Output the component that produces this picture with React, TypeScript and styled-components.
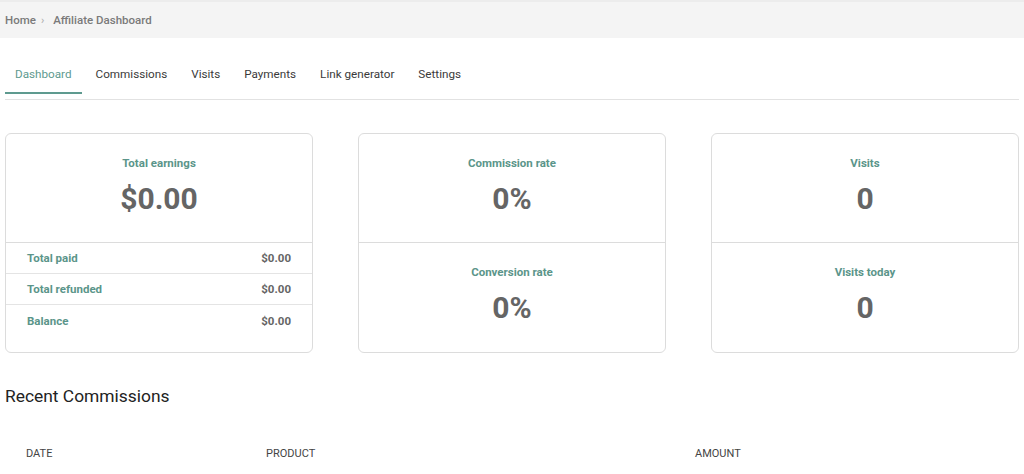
import React from 'react';
import styled, { createGlobalStyle } from 'styled-components';

const GlobalStyle = createGlobalStyle`
  html, body {
    margin: 0;
    padding: 0;
    background: #fff;
    font-family: Roboto, "Liberation Sans", Arial, sans-serif;
  }
  * { box-sizing: border-box; }
`;

const teal = '#5b958a';

const Page = styled.div`
  width: 1024px;
`;

const TopBar = styled.div`
  height: 38px;
  background: #f4f4f4;
  border-top: 2px solid #ececec;
  display: flex;
  align-items: center;
  padding: 0 5px;
  font-size: 11.5px;
  font-weight: 500;
  color: #7a7a7a;
`;

const Crumb = styled.span`
  color: #7a7a7a;
`;

const CrumbSep = styled.span`
  color: #b0b0b0;
  margin: 0 9px 0 5px;
  font-size: 11px;
`;

const Content = styled.div`
  padding: 0 5px;
`;

const TabList = styled.nav`
  display: flex;
  gap: 4px;
  margin-top: 18px;
  padding-bottom: 5px;
  border-bottom: 1px solid #e2e2e2;
`;

const Tab = styled.div<{ $active?: boolean }>`
  height: 38px;
  padding: 0 10px;
  display: flex;
  align-items: center;
  font-size: 11.7px;
  color: ${p => (p.$active ? '#5e9a8f' : '#3a3a3a')};
  border-bottom: 2px solid ${p => (p.$active ? '#5e9a8f' : 'transparent')};
`;

const CardGrid = styled.div`
  display: grid;
  grid-template-columns: repeat(3, 1fr);
  gap: 45px;
  margin-top: 33px;
`;

const Card = styled.div`
  border: 1px solid #dcdcdc;
  border-radius: 6px;
  display: flex;
  flex-direction: column;
`;

const StatBlock = styled.div<{ $divider?: boolean }>`
  height: 108px;
  display: flex;
  flex-direction: column;
  align-items: center;
  padding-top: 21px;
  border-top: ${p => (p.$divider ? '1px solid #dcdcdc' : 'none')};
`;

const StatLabel = styled.div`
  font-size: 11.5px;
  font-weight: 700;
  line-height: 16px;
  color: ${teal};
`;

const StatValue = styled.div`
  font-size: 30px;
  font-weight: 700;
  line-height: 36px;
  margin-top: 10px;
  color: #656565;
`;

const Rows = styled.div`
  border-top: 1px solid #dcdcdc;
  padding-bottom: 16px;
`;

const Row = styled.div`
  height: 31px;
  display: flex;
  align-items: center;
  justify-content: space-between;
  padding: 0 21px;
  font-size: 11.5px;
  font-weight: 700;
  border-bottom: 1px solid #e4e4e4;

  &:last-child {
    border-bottom: none;
  }
`;

const RowLabel = styled.span`
  color: ${teal};
`;

const RowValue = styled.span`
  color: #656565;
`;

const SectionTitle = styled.h2`
  margin: 32px 0 0;
  font-size: 17.4px;
  line-height: 22px;
  font-weight: 400;
  color: #222;
`;

const Table = styled.div`
  margin-top: 39px;
`;

const HeadRow = styled.div`
  display: grid;
  grid-template-columns: 240px 429px 1fr;
  padding-left: 21px;
`;

const HeadCell = styled.div`
  font-size: 11px;
  line-height: 16px;
  color: #444;
  text-transform: uppercase;
`;

const tabs = ['Dashboard', 'Commissions', 'Visits', 'Payments', 'Link generator', 'Settings'];

export default function App() {
  return (
    <Page>
      <GlobalStyle />
      <TopBar>
        <Crumb>Home</Crumb>
        <CrumbSep>›</CrumbSep>
        <Crumb>Affiliate Dashboard</Crumb>
      </TopBar>
      <Content>
        <TabList>
          {tabs.map((t, i) => (
            <Tab key={t} $active={i === 0}>{t}</Tab>
          ))}
        </TabList>

        <CardGrid>
          <Card>
            <StatBlock>
              <StatLabel>Total earnings</StatLabel>
              <StatValue>$0.00</StatValue>
            </StatBlock>
            <Rows>
              <Row><RowLabel>Total paid</RowLabel><RowValue>$0.00</RowValue></Row>
              <Row><RowLabel>Total refunded</RowLabel><RowValue>$0.00</RowValue></Row>
              <Row><RowLabel>Balance</RowLabel><RowValue>$0.00</RowValue></Row>
            </Rows>
          </Card>
          <Card>
            <StatBlock>
              <StatLabel>Commission rate</StatLabel>
              <StatValue>0%</StatValue>
            </StatBlock>
            <StatBlock $divider>
              <StatLabel>Conversion rate</StatLabel>
              <StatValue>0%</StatValue>
            </StatBlock>
          </Card>
          <Card>
            <StatBlock>
              <StatLabel>Visits</StatLabel>
              <StatValue>0</StatValue>
            </StatBlock>
            <StatBlock $divider>
              <StatLabel>Visits today</StatLabel>
              <StatValue>0</StatValue>
            </StatBlock>
          </Card>
        </CardGrid>

        <SectionTitle>Recent Commissions</SectionTitle>
        <Table>
          <HeadRow>
            <HeadCell>Date</HeadCell>
            <HeadCell>Product</HeadCell>
            <HeadCell>Amount</HeadCell>
          </HeadRow>
        </Table>
      </Content>
    </Page>
  );
}
